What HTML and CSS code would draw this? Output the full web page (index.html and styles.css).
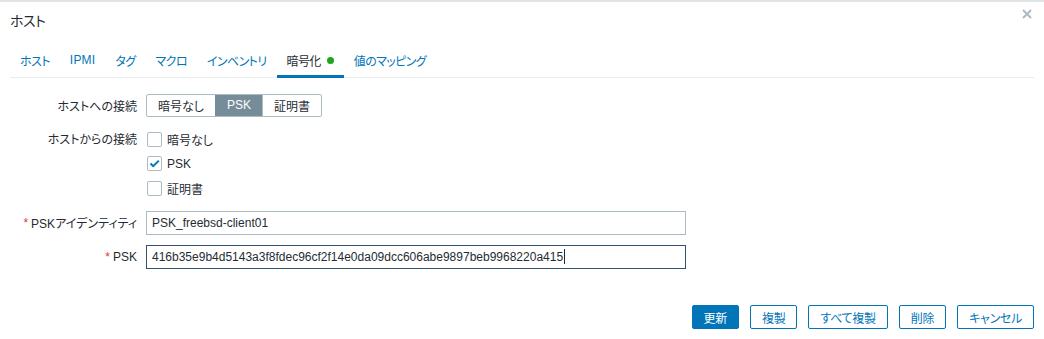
FILE: index.html
```html
<!DOCTYPE html>
<html lang="ja">
<head>
    <meta charset="UTF-8">
    <meta name="viewport" content="width=device-width, initial-scale=1.0">
    <title>ホスト</title>
    <link rel="stylesheet" href="styles.css">
</head>
<body>
    <div class="dialog">
        <div class="dialog-header">
            <h4>ホスト</h4>
            <button class="btn-close" title="閉じる">
                <svg width="10" height="10" viewBox="0 0 10 10"><path d="M1 1L9 9M9 1L1 9" stroke="#acbbc2" stroke-width="2"/></svg>
            </button>
        </div>

        <ul class="tabs">
            <li><a href="#">ホスト</a></li>
            <li><a href="#" class="latin">IPMI</a></li>
            <li><a href="#">タグ</a></li>
            <li><a href="#">マクロ</a></li>
            <li><a href="#">インベントリ</a></li>
            <li class="active"><a href="#">暗号化<span class="dot"></span></a></li>
            <li><a href="#">値のマッピング</a></li>
        </ul>

        <div class="form-grid">
            <label class="form-label">ホストへの接続</label>
            <div class="form-field">
                <ul class="segmented">
                    <li>暗号なし</li>
                    <li class="selected">PSK</li>
                    <li>証明書</li>
                </ul>
            </div>

            <label class="form-label label-top">ホストからの接続</label>
            <div class="form-field">
                <ul class="check-list">
                    <li><span class="checkbox"></span>暗号なし</li>
                    <li><span class="checkbox checked">
                        <svg width="13" height="13" viewBox="0 0 13 13"><path d="M2.5 6.5L5.2 9.2L10.8 3.6" fill="none" stroke="#0275b8" stroke-width="2"/></svg>
                    </span>PSK</li>
                    <li><span class="checkbox"></span>証明書</li>
                </ul>
            </div>

            <label class="form-label"><span class="required">*</span> PSKアイデンティティ</label>
            <div class="form-field">
                <div class="textbox">PSK_freebsd-client01</div>
            </div>

            <label class="form-label"><span class="required">*</span> PSK</label>
            <div class="form-field">
                <div class="textbox focused">416b35e9b4d5143a3f8fdec96cf2f14e0da09dcc606abe9897beb9968220a415<span class="caret"></span></div>
            </div>
        </div>

        <div class="dialog-footer">
            <button class="btn primary">更新</button>
            <button class="btn">複製</button>
            <button class="btn">すべて複製</button>
            <button class="btn">削除</button>
            <button class="btn">キャンセル</button>
        </div>
    </div>
</body>
</html>
```

FILE: styles.css
```css
body {
    margin: 0;
    background: #ffffff;
    font-family: "Liberation Sans", Arial, "Noto Sans CJK JP", sans-serif;
    font-size: 12px;
    font-feature-settings: "palt";
    color: #1f2c33;
}
.dialog {
    border-top: 2px solid #dfe4e7;
    height: 337px;
    box-sizing: border-box;
    display: flex;
    flex-direction: column;
}
.dialog-header {
    display: flex;
    justify-content: space-between;
    align-items: flex-start;
    padding: 0 10px;
    height: 42px;
}
.dialog-header h4 {
    margin: 0;
    padding-top: 11px;
    font-size: 14px;
    font-weight: normal;
    line-height: 16px;
    letter-spacing: -0.5px;
}
.btn-close {
    border: none;
    background: none;
    padding: 0;
    margin: 7px 2px 0 0;
    width: 10px;
    height: 10px;
    cursor: pointer;
    display: flex;
}

/* Tabs */
.tabs {
    list-style: none;
    margin: 0 10px;
    padding: 0;
    display: flex;
    border-bottom: 1px solid #ebeef0;
}
.tabs li {
    padding: 0 10px;
    height: 34px;
    box-sizing: border-box;
    display: flex;
    align-items: center;
    border-bottom: 3px solid transparent;
    margin-bottom: -1px;
    padding-top: 1px;
}
.tabs a {
    color: #0275b8;
    text-decoration: none;
    display: flex;
    align-items: center;
    letter-spacing: -0.6px;
}
.tabs a.latin {
    letter-spacing: 0.2px;
}
.tabs li.active {
    border-bottom-color: #0275b8;
}
.tabs li.active a {
    color: #1f2c33;
}
.dot {
    display: inline-block;
    width: 7px;
    height: 7px;
    border-radius: 50%;
    background: #1ea51e;
    margin-left: 6px;
}

/* Form */
.form-grid {
    display: grid;
    grid-template-columns: 137px 540px;
    column-gap: 9px;
    row-gap: 10px;
    padding-top: 15px;
}
.form-label {
    text-align: right;
    display: flex;
    align-items: center;
    justify-content: flex-end;
    min-height: 24px;
}
.form-label.label-top {
    align-items: flex-start;
    padding-top: 3px;
    min-height: 0;
}
.required {
    color: #e33734;
    margin-right: 3px;
}
.form-field {
    display: flex;
    align-items: center;
}

.segmented {
    list-style: none;
    margin: 0;
    padding: 0;
    display: flex;
    border: 1px solid #acbbc2;
    border-radius: 2px;
    height: 23px;
    box-sizing: border-box;
}
.segmented li {
    padding: 0 11px;
    display: flex;
    align-items: center;
    border-left: 1px solid #acbbc2;
}
.segmented li:first-child {
    border-left: none;
}
.segmented li.selected {
    background: #768d99;
    color: #ffffff;
    border-color: #768d99;
}

.check-list {
    list-style: none;
    margin: 0;
    padding: 0;
}
.check-list li {
    display: flex;
    align-items: center;
    height: 24.5px;
}
.checkbox {
    width: 15px;
    height: 15px;
    box-sizing: border-box;
    border: 1px solid #acbbc2;
    border-radius: 2px;
    margin: 0 5px 0 1px;
    display: flex;
    align-items: center;
    justify-content: center;
}

.textbox {
    width: 540px;
    height: 24px;
    box-sizing: border-box;
    border: 1px solid #acbbc2;
    padding: 0 5px;
    display: flex;
    align-items: center;
    color: #1f2c33;
}
.textbox.focused {
    border-color: #34526f;
}
.caret {
    display: inline-block;
    width: 1px;
    height: 15px;
    background: #1f2c33;
    margin-left: 1px;
}

/* Footer */
.dialog-footer {
    margin-top: auto;
    display: flex;
    justify-content: flex-end;
    gap: 11px;
    padding: 0 10px 8px;
}
.btn {
    height: 24px;
    padding: 0 11px;
    border: 1px solid #0275b8;
    border-radius: 2px;
    background: #ffffff;
    color: #0275b8;
    font-family: inherit;
    font-size: 12px;
    font-feature-settings: "palt";
    letter-spacing: -0.3px;
    cursor: pointer;
}
.btn.primary {
    background: #0275b8;
    color: #ffffff;
}
```
